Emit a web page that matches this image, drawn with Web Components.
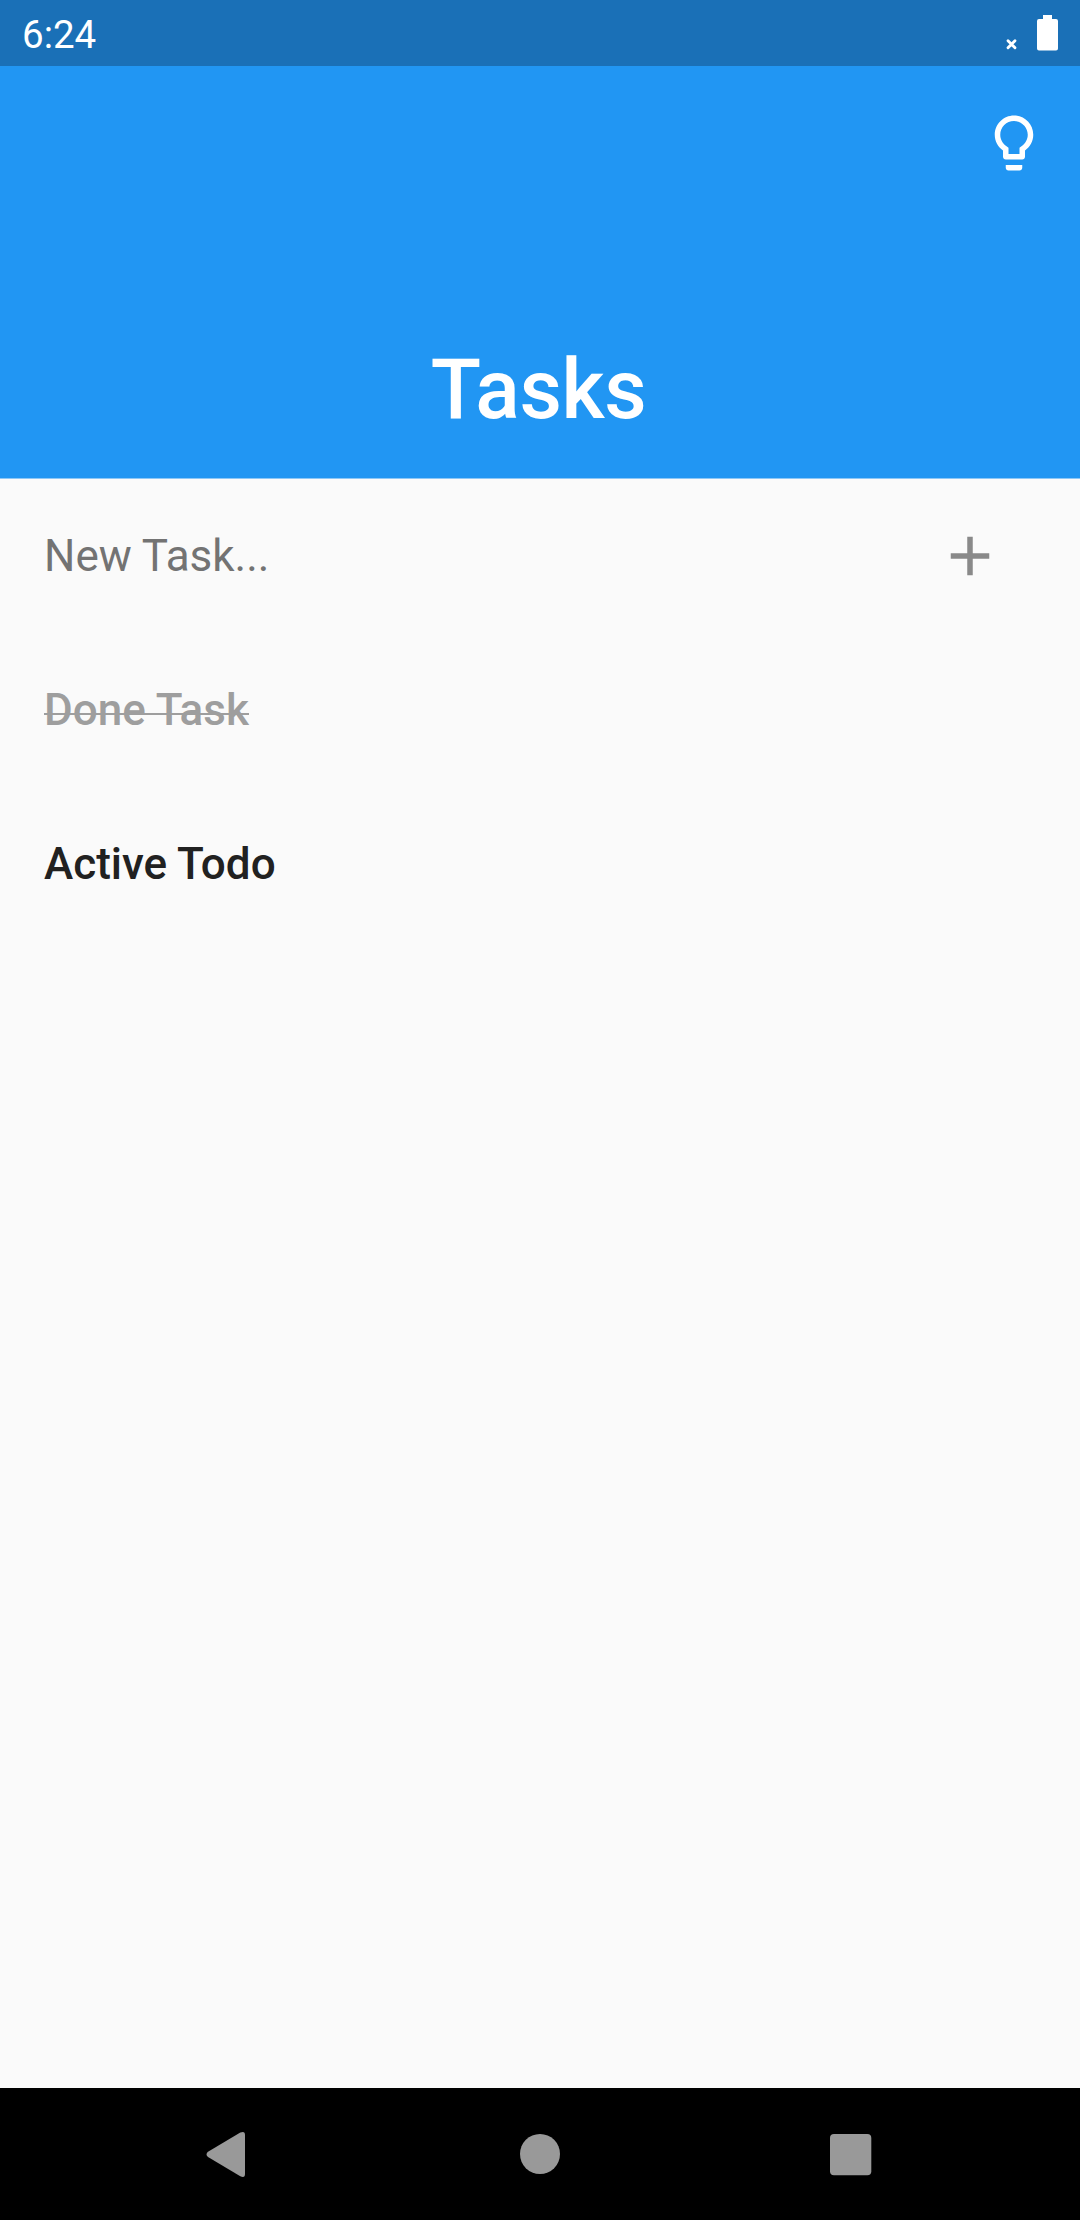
<!DOCTYPE html>
<html lang="en">
<head>
<meta charset="utf-8">
<title>Tasks</title>
<style>
html, body { margin: 0; padding: 0; background: #fafafa; }
body { font-family: Roboto, "Liberation Sans", sans-serif; }
</style>
</head>
<body>
<tasks-screen></tasks-screen>
<script>
const define = (name, html) => customElements.define(name, class extends HTMLElement {
  constructor() {
    super();
    const t = document.createElement('template');
    t.innerHTML = html;
    this.attachShadow({ mode: 'open' }).append(t.content.cloneNode(true));
  }
});

define('status-bar', `
<style>
:host { display: flex; align-items: flex-start; justify-content: space-between; height: 66px; background: #1a70b7; color: #fff; box-sizing: border-box; padding-left: 22px; }
span { font-size: 38.5px; line-height: 70px; }
svg { display: block; }
</style>
<span><slot></slot></span>
<svg width="100" height="66" viewBox="980 0 100 66" fill="#fff">
  <path d="M1008 40.7l7 7M1015 40.7l-7 7" stroke="#fff" stroke-width="2.9" stroke-linecap="round"/>
  <path d="M1043 15h9v4h4q2 0 2 2v27.500q0 2-2 2h-17q-2 0-2-2V21q0-2 2-2h4z"/>
</svg>`);

define('app-header', `
<style>
:host { display: flex; flex-direction: column; justify-content: space-between; height: 413px; box-sizing: border-box; background: #2196f3; color: #fff; padding: 44px 33px 33px; border-bottom: 1px solid #8dc8f7; }
svg { display: block; align-self: flex-end; }
h1 { margin: 0; padding-right: 3px; text-align: center; font-size: 82.5px; line-height: 110px; font-weight: 500; letter-spacing: -0.35px; }
</style>
<svg width="66" height="66" viewBox="0 0 24 24" fill="#fff"><path d="M9 21c0 .55.45 1 1 1h4c.55 0 1-.45 1-1v-1H9v1zm3-19C8.14 2 5 5.14 5 9c0 2.38 1.190 4.470 3 5.740V17c0 .55.45 1 1 1h6c.55 0 1-.45 1-1v-2.260c1.810-1.270 3-3.360 3-5.740 0-3.860-3.140-7-7-7zm2.850 11.100l-.85.6V16h-4v-2.300l-.85-.6C7.800 12.160 7 10.630 7 9c0-2.760 2.240-5 5-5s5 2.240 5 5c0 1.630-.8 3.160-2.150 4.100z"/></svg>
<h1><slot></slot></h1>`);

define('new-task-row', `
<style>
:host { display: flex; align-items: center; justify-content: space-between; height: 153px; box-sizing: border-box; padding: 0 77px 0 44px; color: #737373; font-size: 44px; }
svg { display: block; }
</style>
<span><slot></slot></span>
<svg width="66" height="66" viewBox="0 0 24 24" fill="#898989"><path d="M19 13h-6v6h-2v-6H5v-2h6V5h2v6h6v2z"/></svg>`);

define('task-row', `
<style>
:host { display: flex; align-items: center; height: 154px; box-sizing: border-box; padding: 1px 44px 0; color: #212121; font-size: 44px; font-weight: 500; }
span { line-height: 52px; }
:host([done]) { color: #9e9e9e; }
/* strike line, slightly below the middle of the lowercase letters */
:host([done]) span { background: linear-gradient(currentColor, currentColor) 0 29px / 100% 2px no-repeat; }
</style>
<span><slot></slot></span>`);

define('nav-bar', `
<style>
:host { display: flex; height: 132px; background: #000; }
svg { display: block; }
</style>
<svg width="1080" height="132" viewBox="0 2088 1080 132" fill="#999">
  <path d="M208 2151.800L240.300 2132.600Q245 2130.500 245 2135V2174Q245 2178.500 240.300 2176.300L208 2157Q205 2154.500 208 2151.800z"/>
  <circle cx="540" cy="2154" r="20"/>
  <rect x="830" y="2134" width="41.300" height="41.200" rx="4"/>
</svg>`);

define('tasks-screen', `
<style>
:host { display: flex; flex-direction: column; width: 1080px; height: 2220px; background: #fafafa; }
main { flex: 1; display: flex; flex-direction: column; }
</style>
<status-bar>6:24</status-bar>
<app-header>Tasks</app-header>
<main>
  <new-task-row>New Task...</new-task-row>
  <task-row done>Done Task</task-row>
  <task-row>Active Todo</task-row>
</main>
<nav-bar></nav-bar>`);
</script>
</body>
</html>
